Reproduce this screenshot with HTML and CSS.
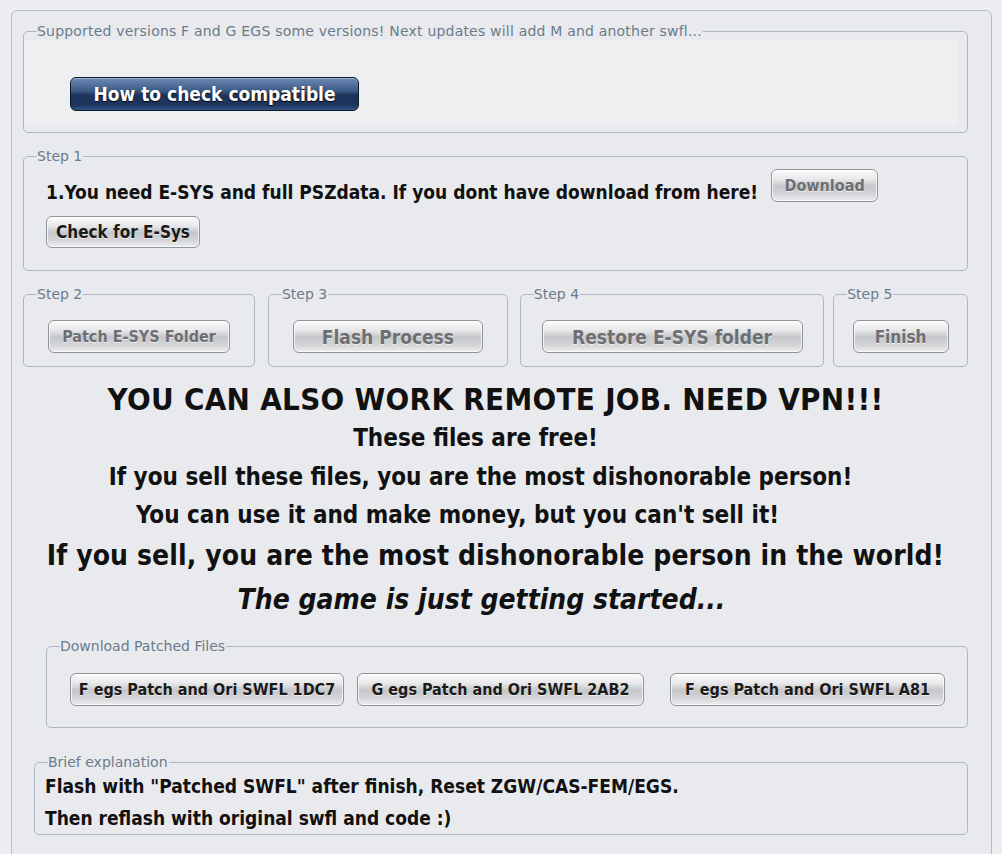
FILE: index.html
```html
<!DOCTYPE html>
<html lang="en">
<head>
    <meta charset="UTF-8">
    <title>SWFL Patcher</title>
    <link rel="stylesheet" href="styles.css">
</head>
<body>
    <div class="window">
        <fieldset class="group group-top">
            <legend>Supported versions F and G EGS some versions! Next updates will add M and another swfl...</legend>
            <div class="top-panel">
                <button class="btn btn-blue">How to check compatible</button>
            </div>
        </fieldset>

        <fieldset class="group group-step1">
            <legend>Step 1</legend>
            <div class="group-body">
                <div class="step1-row">
                    <span class="step1-text">1.You need E-SYS and full PSZdata. If you dont have download from here!</span>
                    <button class="btn btn-off btn-download">Download</button>
                </div>
                <button class="btn btn-check">Check for E-Sys</button>
            </div>
        </fieldset>

        <div class="steps">
            <fieldset class="group step step2">
                <legend>Step 2</legend>
                <button class="btn btn-off btn-patch">Patch E-SYS Folder</button>
            </fieldset>
            <fieldset class="group step step3">
                <legend>Step 3</legend>
                <button class="btn btn-off btn-flash">Flash Process</button>
            </fieldset>
            <fieldset class="group step step4">
                <legend>Step 4</legend>
                <button class="btn btn-off btn-restore">Restore E-SYS folder</button>
            </fieldset>
            <fieldset class="group step step5">
                <legend>Step 5</legend>
                <button class="btn btn-off btn-finish">Finish</button>
            </fieldset>
        </div>

        <div class="notes">
            <div class="note note-vpn">YOU CAN ALSO WORK REMOTE JOB. NEED VPN!!!</div>
            <div class="note note-free">These files are free!</div>
            <div class="note note-sell">If you sell these files, you are the most dishonorable person!</div>
            <div class="note note-use">You can use it and make money, but you can't sell it!</div>
            <div class="note note-world">If you sell, you are the most dishonorable person in the world!</div>
            <div class="note note-game">The game is just getting started...</div>
        </div>

        <fieldset class="group group-files">
            <legend>Download Patched Files</legend>
            <div class="group-body files-row">
                <button class="btn btn-file file1">F egs Patch and Ori SWFL 1DC7</button>
                <button class="btn btn-file file2">G egs Patch and Ori SWFL 2AB2</button>
                <button class="btn btn-file file3">F egs Patch and Ori SWFL A81</button>
            </div>
        </fieldset>

        <fieldset class="group group-brief">
            <legend>Brief explanation</legend>
            <div class="group-body">
                <p class="brief">Flash with "Patched SWFL" after finish, Reset ZGW/CAS-FEM/EGS.</p>
                <p class="brief">Then reflash with original swfl and code :)</p>
            </div>
        </fieldset>
    </div>
</body>
</html>
```

FILE: styles.css
```css
body {
    margin: 0;
    background: #eceef1;
    font-family: "DejaVu Sans Condensed", "DejaVu Sans", sans-serif;
    color: #111;
}
.window {
    margin: 10px 10px 0 11px;
    height: 860px;
    box-sizing: border-box;
    border: 1px solid #b7bfca;
    border-radius: 6px;
    background: #e8eaed;
    padding: 12px 23px 0 11px;
}
.group {
    margin: 0;
    padding: 0;
    border: 1px solid #aeb7c3;
    border-radius: 5px;
    min-width: 0;
}
.group legend {
    margin-left: 13px;
    padding: 0 1px 0 0;
    font-family: "DejaVu Sans", sans-serif;
    font-size: 14px;
    line-height: 16px;
    color: #6c7b8b;
    font-weight: normal;
}

/* buttons */
.btn {
    font-family: "DejaVu Sans Condensed", "DejaVu Sans", sans-serif;
    font-weight: bold;
    font-size: 16px;
    height: 33px;
    padding: 0;
    border: 1px solid #8f949c;
    border-radius: 6px;
    background: linear-gradient(#fbfbfb 0%, #e8e8ea 30%, #c6c7ca 52%, #d4d5d8 78%, #efeff0 100%);
    color: #1a1a1a;
    text-shadow: 0 1px 0 rgba(255, 255, 255, 0.6);
    box-shadow: inset 0 0 0 1px rgba(255, 255, 255, 0.7);
    cursor: pointer;
}
.btn-off {
    color: #6e6f72;
    font-size: 17px;
}
.btn-blue {
    height: 34px;
    width: 289px;
    font-size: 19px;
    color: #fff;
    border: 1px solid #0d1a2e;
    background: linear-gradient(#6c8ab4 0%, #3c5a86 40%, #1c3258 55%, #1d3560 85%, #345582 100%);
    text-shadow: 0 1px 1px #000;
    box-shadow: inset 0 1px 0 rgba(255, 255, 255, 0.35);
}

/* top group */
.group-top {
    padding: 0 0 7px 0;
}
.group-top legend {
    letter-spacing: 0.2px;
}
.top-panel {
    margin: 1px 9px 0 0;
    height: 85px;
    background: #eeeff1;
    padding: 37px 0 0 46px;
    box-sizing: border-box;
}

/* step 1 */
.group-step1 {
    margin-top: 15px;
}
.group-step1 .group-body {
    padding: 5px 0 22px 22px;
}
.step1-row {
    display: flex;
    align-items: flex-end;
    gap: 13px;
}
.step1-text {
    font-weight: bold;
    font-size: 19px;
    line-height: 20px;
}
.btn-download {
    width: 107px;
    font-size: 16px;
}
.btn-check {
    margin-top: 14px;
    width: 154px;
    height: 32px;
    font-size: 17px;
}

/* steps 2 - 5 */
.steps {
    display: flex;
    margin-top: 15px;
}
.step {
    display: flex;
    justify-content: center;
    padding: 18px 0 13px 0;
}
.step2 { width: 232px; }
.step3 { width: 240px; margin-left: 13px; }
.step4 { width: 305px; margin-left: 12px; }
.step5 { width: 134px; margin-left: 9px; }
.btn-patch { width: 182px; font-size: 16px; }
.btn-flash { width: 190px; font-size: 19px; }
.btn-restore { width: 261px; font-size: 19px; }
.btn-finish { width: 96px; font-size: 17px; }

/* notes */
.notes {
    padding: 12px 0 0 0;
    text-align: center;
}
.note {
    font-weight: bold;
}
.note-vpn {
    font-size: 31px;
    line-height: 40px;
    letter-spacing: 0.3px;
}
.note-free {
    font-size: 24px;
    line-height: 39px;
    padding-right: 40px;
}
.note-sell {
    font-size: 24px;
    line-height: 39px;
    padding-right: 30px;
}
.note-use {
    font-size: 24px;
    line-height: 37px;
    padding-right: 76px;
}
.note-world {
    font-size: 28px;
    line-height: 44px;
    letter-spacing: 0.1px;
}
.note-game {
    font-size: 28px;
    line-height: 44px;
    font-style: italic;
    padding-right: 28px;
}

/* download patched files */
.group-files {
    margin: 16px 0 0 23px;
}
.files-row {
    display: flex;
    padding: 19px 0 21px 23px;
}
.btn-file {
    font-size: 16px;
}
.file1 { width: 274px; }
.file2 { width: 287px; margin-left: 13px; }
.file3 { width: 275px; margin-left: 26px; }

/* brief */
.group-brief {
    margin: 26px 0 0 11px;
}
.group-brief .group-body {
    padding: 0 0 0 10px;
}
.brief {
    margin: 0;
    font-weight: bold;
    font-size: 19px;
    line-height: 32px;
}
```
